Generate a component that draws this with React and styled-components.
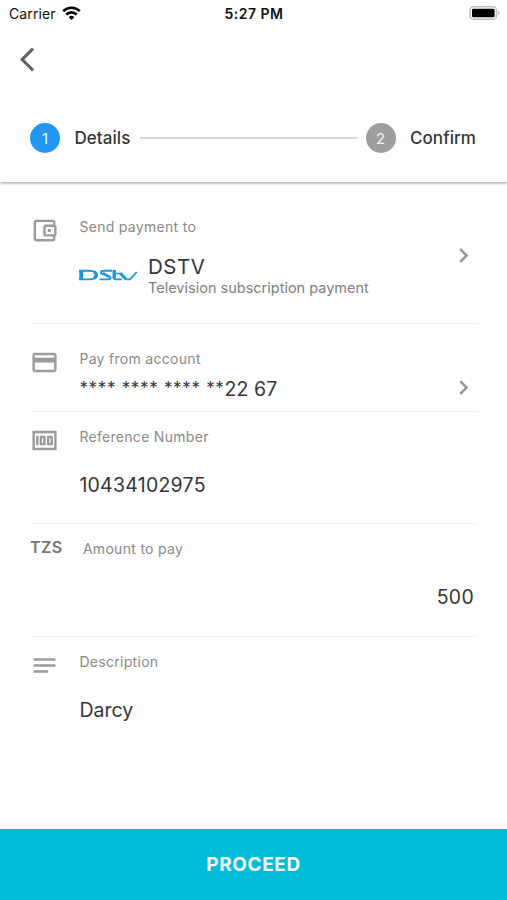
import React from 'react'
import styled, { createGlobalStyle } from 'styled-components'
import {
  MdArrowBackIos,
  MdChevronRight,
  MdMoney,
  MdNotes,
  MdOutlineAccountBalanceWallet,
  MdPayment,
} from 'react-icons/md'

const GlobalStyle = createGlobalStyle`
  * {
    box-sizing: border-box;
  }
  body {
    margin: 0;
    background: #fefefe;
    font-family: Inter, "Liberation Sans", sans-serif;
    color: #363636;
  }
`

const WifiIcon = () => (
  <svg width="19" height="14" viewBox="0 0 19 14" fill="none" stroke="#000" strokeWidth="2.6">
    <path d="M1.2 5.2a11.8 11.8 0 0 1 16.6 0" />
    <path d="M4.3 8.5a7.4 7.4 0 0 1 10.4 0" />
    <path d="M9.5 14 6.7 11.2a4 4 0 0 1 5.6 0z" fill="#000" stroke="none" />
  </svg>
)

const BatteryIcon = () => (
  <svg width="32" height="16" viewBox="0 0 32 16">
    <rect x="1.1" y="1.7" width="26.4" height="12.6" rx="3.6" fill="#fff" stroke="#bdbdbd" strokeWidth="1.5" />
    <rect x="3" y="3.7" width="22.6" height="8.6" rx="1.4" fill="#000" />
    <path d="M29.2 5.8c1.7.6 1.7 3.8 0 4.4z" fill="#b9b9b9" />
  </svg>
)

const DstvLogo = () => (
  <svg width="60" height="14" viewBox="0 0 60 14" fill="none" stroke="#1b96d6">
    <path d="M2.2 1.4v9.4" strokeWidth="3.8" />
    <path d="M0 1.8h10.5c9.6 0 9.6 8.6 0 8.6H0" strokeWidth="1.9" />
    <path d="M15 3c3 1.6 3 4.6 0 6.2" strokeWidth="3.4" />
    <path d="M33 1.8h-8.3c-3.4 0-3.4 2.6-.4 3.4l5 1.6c3.2 1.2 2.6 3.6-.6 3.6h-8.2" strokeWidth="1.9" />
    <path d="M24 4 30 8" strokeWidth="2.6" />
    <path d="M35 .9v7.6c0 1.5.8 1.9 2.4 1.9h5.4" strokeWidth="1.9" />
    <path d="M35.2.9v9" strokeWidth="3.4" />
    <path d="M36 4.5h6.5" strokeWidth="1.5" />
    <path d="M41.6 4.4l5.6 6H51L57.8 3" strokeWidth="1.8" />
    <path d="M41.4 4.4l5.4 5.6" strokeWidth="3" />
  </svg>
)

const App = () => {
  return (
    <>
      <GlobalStyle />
      <Screen>
        <Header>
          <StatusBar>
            <Carrier>
              Carrier
              <WifiIcon />
            </Carrier>
            <Clock>5:27 PM</Clock>
            <Battery>
              <BatteryIcon />
            </Battery>
          </StatusBar>
          <BackButton aria-label="Back">
            <MdArrowBackIos />
          </BackButton>
          <Stepper>
            <StepNumber $active>1</StepNumber>
            <StepLabel>Details</StepLabel>
            <StepLine />
            <StepNumber>2</StepNumber>
            <StepLabel>Confirm</StepLabel>
          </Stepper>
        </Header>

        <Form>
          <Row $height={141} $top={29}>
            <IconCell><MdOutlineAccountBalanceWallet /></IconCell>
            <Content>
              <Label>Send payment to</Label>
              <Payee>
                <DstvLogo />
                <div>
                  <PayeeName>DSTV</PayeeName>
                  <PayeeNote>Television subscription payment</PayeeNote>
                </div>
              </Payee>
            </Content>
            <Arrow><MdChevronRight /></Arrow>
          </Row>
          <Row $height={88} $top={20}>
            <IconCell><MdPayment /></IconCell>
            <Content>
              <Label>Pay from account</Label>
              <Value $top={10} $spacing="0.1px">
                <Mask>**** **** **** **</Mask>22 67
              </Value>
            </Content>
            <Arrow><MdChevronRight /></Arrow>
          </Row>
          <Row $height={112} $top={10} $short>
            <IconCell><MdMoney /></IconCell>
            <Content>
              <Label>Reference Number</Label>
              <Value $top={28} $spacing="0.25px">10434102975</Value>
            </Content>
          </Row>
          <Row $height={113} $top={10} $short>
            <Currency>TZS</Currency>
            <Content>
              <Label $indent>Amount to pay</Label>
              <Value $top={28} $right>500</Value>
            </Content>
          </Row>
          <Row $height={113} $top={10} $last>
            <IconCell><MdNotes /></IconCell>
            <Content>
              <Label>Description</Label>
              <Value $top={28} $spacing="0">Darcy</Value>
            </Content>
          </Row>
        </Form>

        <Proceed>PROCEED</Proceed>
      </Screen>
    </>
  )
}

const Screen = styled.main`
  width: 507px;
  height: 900px;
  display: flex;
  flex-direction: column;
  overflow: hidden;
`

const Header = styled.header`
  height: 182px;
  flex: none;
  background: #fefefe;
  box-shadow: 0 1px 3px rgba(0, 0, 0, 0.4);
`

const StatusBar = styled.div`
  height: 27px;
  display: grid;
  grid-template-columns: 1fr auto 1fr;
  align-items: center;
  padding: 0 6px 0 9px;
  color: #111;
`

const Carrier = styled.div`
  display: flex;
  align-items: center;
  gap: 6px;
  font-size: 14px;
  letter-spacing: 0.1px;

  svg {
    margin-bottom: 2px;
  }
`

const Clock = styled.div`
  margin-right: 2px;
  font-size: 14px;
  font-weight: 600;
  letter-spacing: 0.5px;
`

const Battery = styled.div`
  display: flex;
  justify-content: flex-end;
  padding-bottom: 1px;
`

const BackButton = styled.button`
  display: flex;
  margin: 18px 0 0 20px;
  padding: 0;
  border: 0;
  background: none;
  color: #606060;
  font-size: 29px;
`

const Stepper = styled.div`
  display: flex;
  align-items: center;
  margin-top: 49px;
  padding: 0 31px 0 30px;
`

const StepNumber = styled.span`
  width: 30px;
  height: 30px;
  display: flex;
  align-items: center;
  justify-content: center;
  border-radius: 50%;
  background: ${({ $active }) => ($active ? '#2196f3' : '#9e9e9e')};
  color: #f2f2f2;
  font-size: 15px;
`

const StepLabel = styled.span`
  margin-left: 14.5px;
  font-size: 17px;
  font-weight: 500;
  letter-spacing: 0.05px;
`

const StepLine = styled.span`
  flex: 1;
  height: 2px;
  margin: 0 9px 0 10px;
  background: #d8d8d8;
`

const Form = styled.section`
  flex: 1;
  padding: 1px 29px 0 32px;
`

const Row = styled.div`
  display: flex;
  align-items: flex-start;
  height: ${({ $height }) => $height}px;
  margin-right: ${({ $short }) => ($short ? 2 : 0)}px;
  padding-top: ${({ $top }) => $top}px;
  border-bottom: ${({ $last }) => ($last ? 0 : '1px solid #f1f1f1')};
`

const IconCell = styled.div`
  display: flex;
  width: 48px;
  margin: 4px 0 0 -2px;
  color: #9b9b9b;
  font-size: 29px;
`

const Currency = styled.div`
  width: 48px;
  margin: 3px 0 0 -2px;
  color: #777;
  font-size: 16px;
  line-height: 20px;
  font-weight: 600;
  letter-spacing: 0.4px;
`

const Content = styled.div`
  flex: 1;
  margin-left: 1.4px;
`

const Label = styled.div`
  padding-left: ${({ $indent }) => ($indent ? 3.5 : 0)}px;
  margin-top: 5px;
  color: #8a8a8a;
  font-size: 14px;
  line-height: 20px;
  letter-spacing: 0.3px;
`

const Payee = styled.div`
  display: flex;
  align-items: center;
  gap: 9px;
  margin: 17px 0 0 -0.4px;
`

const PayeeName = styled.div`
  font-size: 20.5px;
  line-height: 25px;
  letter-spacing: 0.5px;
`

const PayeeNote = styled.div`
  color: #808080;
  font-size: 14.5px;
  line-height: 18px;
`

const Value = styled.div`
  margin-top: ${({ $top }) => $top}px;
  padding-right: ${({ $right }) => ($right ? 2 : 0)}px;
  text-align: ${({ $right }) => ($right ? 'right' : 'left')};
  font-size: 19.5px;
  line-height: 20px;
  letter-spacing: ${({ $spacing }) => $spacing || '0.3px'};
`

const Mask = styled.span`
  font-size: 17px;
  line-height: 1;
  letter-spacing: 0.68px;
  vertical-align: 2px;
`

const Arrow = styled.div`
  display: flex;
  margin: 29px 0.5px 0 0;
  color: #949494;
  font-size: 29px;
`

const Proceed = styled.button`
  height: 71px;
  flex: none;
  border: 0;
  background: #00bcd9;
  color: #f4fdff;
  font-family: inherit;
  font-size: 19px;
  font-weight: 650;
  letter-spacing: 0.6px;
`

export default App
